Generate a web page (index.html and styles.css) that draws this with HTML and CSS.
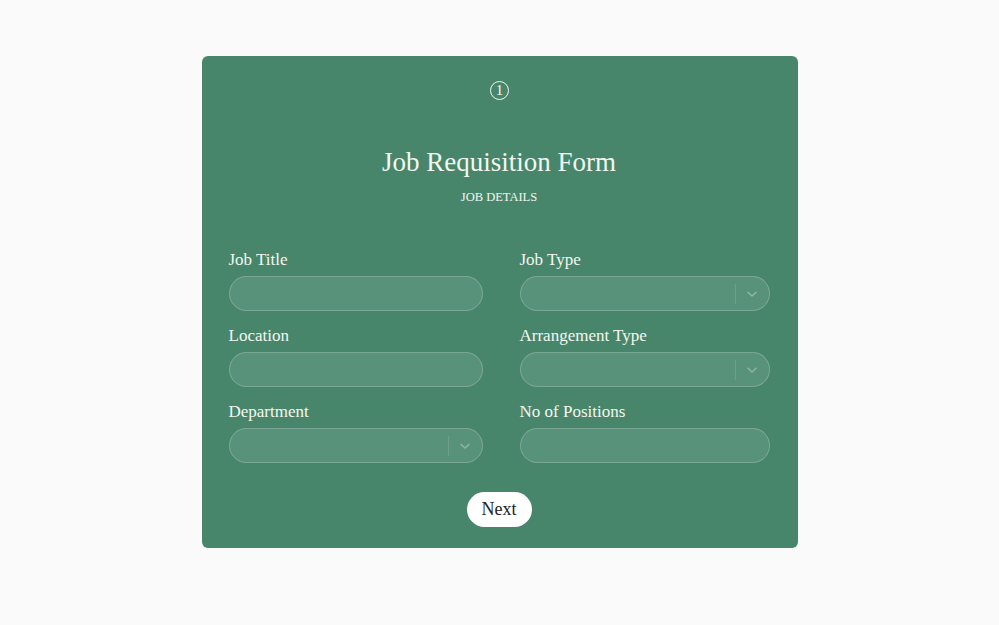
FILE: index.html
```html
<!DOCTYPE html>
<html lang="en">
<head>
  <meta charset="UTF-8">
  <title>Job Requisition Form</title>
  <link rel="stylesheet" href="styles.css">
</head>
<body>
  <div class="card">
    <div class="step"><span class="step-num">1</span></div>
    <h1>Job Requisition Form</h1>
    <div class="subtitle">JOB DETAILS</div>

    <form class="fields" onsubmit="return false">
      <div class="field">
        <label for="jobTitle">Job Title</label>
        <input id="jobTitle" type="text">
      </div>
      <div class="field">
        <label>Job Type</label>
        <div class="select">
          <span class="value"></span>
          <span class="sep"></span>
          <svg class="chevron" viewBox="0 0 20 20" width="16" height="16"><path d="M5 8l5 4.5L15 8" fill="none" stroke="currentColor" stroke-width="2" stroke-linecap="round" stroke-linejoin="round"/></svg>
        </div>
      </div>
      <div class="field">
        <label for="location">Location</label>
        <input id="location" type="text">
      </div>
      <div class="field">
        <label>Arrangement Type</label>
        <div class="select">
          <span class="value"></span>
          <span class="sep"></span>
          <svg class="chevron" viewBox="0 0 20 20" width="16" height="16"><path d="M5 8l5 4.5L15 8" fill="none" stroke="currentColor" stroke-width="2" stroke-linecap="round" stroke-linejoin="round"/></svg>
        </div>
      </div>
      <div class="field">
        <label>Department</label>
        <div class="select">
          <span class="value"></span>
          <span class="sep"></span>
          <svg class="chevron" viewBox="0 0 20 20" width="16" height="16"><path d="M5 8l5 4.5L15 8" fill="none" stroke="currentColor" stroke-width="2" stroke-linecap="round" stroke-linejoin="round"/></svg>
        </div>
      </div>
      <div class="field">
        <label for="positions">No of Positions</label>
        <input id="positions" type="text">
      </div>
    </form>

    <div class="actions">
      <button class="next">Next</button>
    </div>
  </div>
</body>
</html>
```

FILE: styles.css
```css
body {
  font-family: 'Liberation Serif', 'Times New Roman', serif;
  margin: 0;
  background: #fafafa;
  color: #f3f7f1;
}

.card {
  box-sizing: border-box;
  width: 596px;
  margin: 56px auto 0;
  padding: 22px 28px 21px 27px;
  background: #47866b;
  border-radius: 6px;
}

.step {
  display: flex;
  justify-content: center;
  height: 24px;
  align-items: center;
}

.step-num {
  box-sizing: border-box;
  width: 19px;
  height: 19px;
  margin-left: 1px;
  border: 1px solid #f3f7f1;
  border-radius: 50%;
  font-size: 15px;
  line-height: 17px;
  text-align: center;
}

h1 {
  margin: 44px 0 0;
  text-align: center;
  font-size: 27px;
  font-weight: normal;
  line-height: 32px;
}

.subtitle {
  margin-top: 11px;
  text-align: center;
  font-size: 12.5px;
  line-height: 16px;
}

.fields {
  display: grid;
  grid-template-columns: 254px 250px;
  column-gap: 37px;
  row-gap: 15px;
  margin-top: 45px;
}

.field label {
  display: block;
  font-size: 17px;
  line-height: 20px;
  margin-bottom: 6px;
}

.field input,
.select {
  box-sizing: border-box;
  width: 100%;
  height: 35px;
  border: 1px solid rgba(255, 255, 255, 0.2);
  border-radius: 18px;
  background: rgba(255, 255, 255, 0.1);
  color: #fff;
  font-family: inherit;
  font-size: 15px;
  padding: 0 14px;
  outline: none;
}

.select {
  display: flex;
  align-items: center;
  padding: 0 9px 0 14px;
}

.select .value {
  flex: 1;
}

.select .sep {
  width: 1px;
  height: 20px;
  background: rgba(255, 255, 255, 0.12);
  margin-right: 8px;
}

.select .chevron {
  color: rgba(255, 255, 255, 0.3);
}

.actions {
  display: flex;
  justify-content: center;
  margin-top: 29px;
}

.next {
  height: 35px;
  padding: 0 15px;
  border: none;
  border-radius: 18px;
  background: #fff;
  color: #222;
  font-family: inherit;
  font-size: 18px;
  cursor: pointer;
}
```
